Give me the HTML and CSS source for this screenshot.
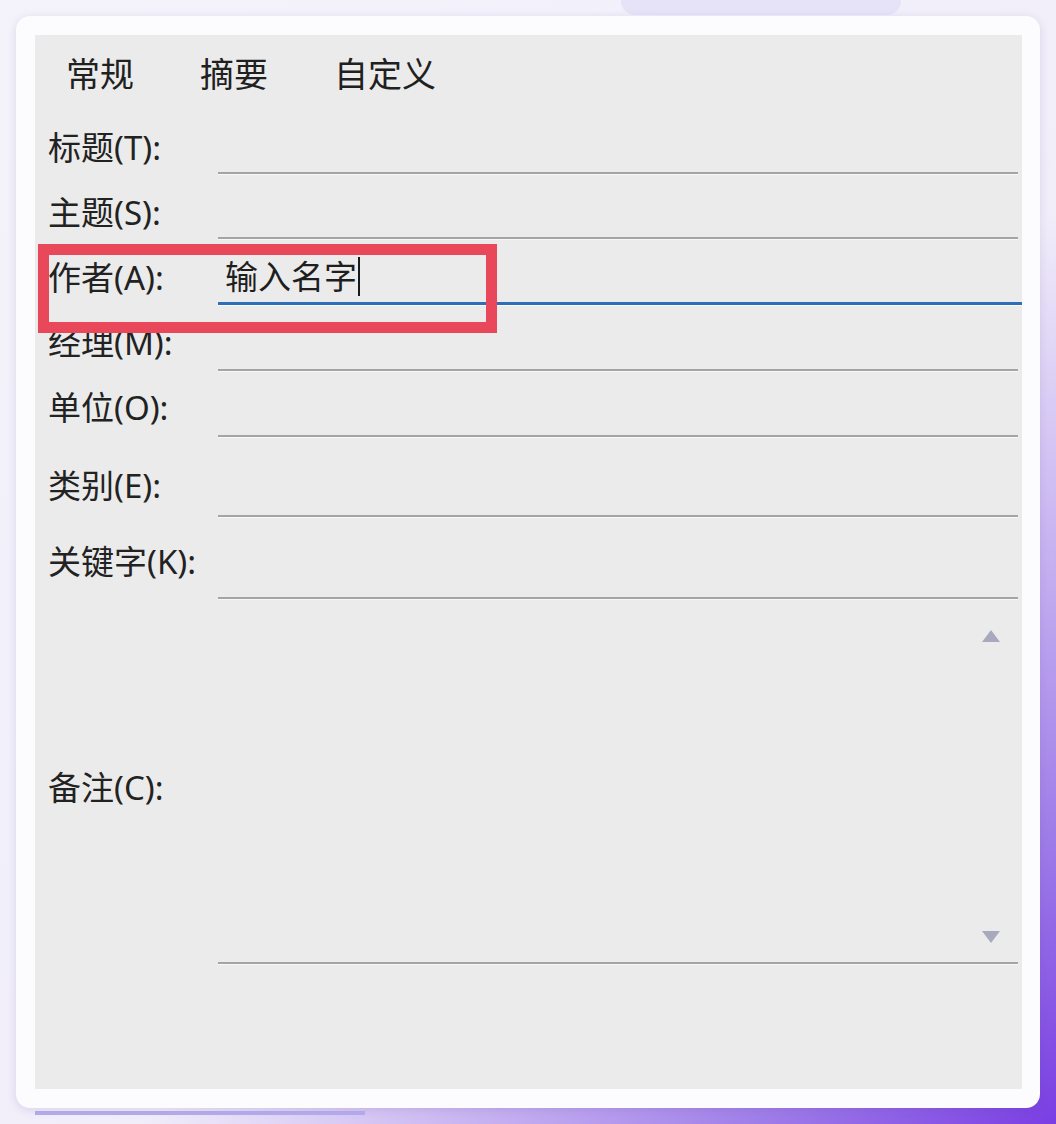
FILE: index.html
```html
<!DOCTYPE html>
<html lang="zh-CN">
<head>
<meta charset="utf-8">
<title>属性 - 摘要</title>
<link rel="stylesheet" href="styles.css">
</head>
<body>
<div class="deco-pill"></div>
<div class="deco-bar"></div>
<div class="card">
  <div class="panel">
    <div class="tabs">
      <span class="tab">常规</span>
      <span class="tab">摘要</span>
      <span class="tab">自定义</span>
    </div>
    <div class="form">
      <div class="row r1"><label class="lbl">标题(T):</label><div class="field"></div></div>
      <div class="row r2"><label class="lbl">主题(S):</label><div class="field"></div></div>
      <div class="row r3"><label class="lbl">作者(A):</label><div class="field active"><span class="value">输入名字</span><span class="caret"></span></div></div>
      <div class="row r4"><label class="lbl">经理(M):</label><div class="field"></div></div>
      <div class="row r5"><label class="lbl">单位(O):</label><div class="field"></div></div>
      <div class="row r6"><label class="lbl">类别(E):</label><div class="field"></div></div>
      <div class="row r7"><label class="lbl">关键字(K):</label><div class="field"></div></div>
      <div class="row r8"><label class="lbl">备注(C):</label>
        <div class="field area">
          <div class="scroll">
            <svg class="arrow" width="20" height="14" viewBox="0 0 20 14"><polygon points="10,1 19,13 1,13" fill="#a9a9bd"/></svg>
            <svg class="arrow" width="20" height="14" viewBox="0 0 20 14"><polygon points="1,1 19,1 10,13" fill="#a9a9bd"/></svg>
          </div>
        </div>
      </div>
    </div>
    <div class="highlight"></div>
  </div>
</div>
</body>
</html>
```
FILE: styles.css
```css
html, body {
  margin: 0;
  padding: 0;
}
body {
  position: relative;
  width: 1056px;
  height: 1124px;
  overflow: hidden;
  background: linear-gradient(135deg, #f4f3fb 0%, #f1eefa 58%, #c3acf0 75%, #a07fe9 86%, #7a3de3 100%);
  font-family: "Noto Sans", "Noto Sans CJK SC", sans-serif;
  color: #1e1e1e;
}
.deco-pill {
  position: absolute;
  left: 621px;
  top: -20px;
  width: 280px;
  height: 35px;
  border-radius: 14px;
  background: #e6e3f9;
}
.deco-bar {
  position: absolute;
  left: 35px;
  top: 1111px;
  width: 330px;
  height: 4px;
  background: #b7aeee;
}
.card {
  position: relative;
  margin: 16px 0 0 16px;
  width: 1024px;
  height: 1092px;
  box-sizing: border-box;
  padding: 19px 18px 19px 19px;
  background: #fcfcfe;
  border-radius: 14px;
  box-shadow: 0 2px 10px rgba(70, 50, 130, 0.14);
}
.panel {
  position: relative;
  height: 100%;
  background: #ebebeb;
  display: flex;
  flex-direction: column;
}
.tabs {
  height: 75px;
  display: flex;
  align-items: center;
  gap: 66px;
  padding-left: 31px;
  font-size: 34px;
  line-height: 40px;
  color: #202020;
  box-sizing: border-box;
  padding-top: 2px;
}
.form {
  display: flex;
  flex-direction: column;
  padding-left: 13px;
  padding-right: 4px;
}
.row {
  display: grid;
  grid-template-columns: 170px 1fr;
}
.r1 { height: 64px; }
.r2 { height: 65px; }
.r3 { height: 66px; }
.r4 { height: 66px; }
.r5 { height: 66px; }
.r6 { height: 80px; }
.r7 { height: 82px; }
.r8 { height: 365px; }
.lbl {
  align-self: end;
  font-size: 33px;
  line-height: 40px;
  margin-bottom: 6px;
  white-space: nowrap;
  color: #222;
}
.r3 .lbl { margin-bottom: 7px; }
.r4 .lbl { margin-bottom: 8px; }
.r5 .lbl { margin-bottom: 9px; }
.r6 .lbl { margin-bottom: 11px; }
.r7 .lbl { margin-bottom: 17px; }
.r8 .lbl { align-self: center; margin-bottom: 0; margin-top: 12px; }
.field {
  border-bottom: 2px solid #a3a3a8;
  box-shadow: 0 1px 0 #f8f8f8;
  display: flex;
  align-items: flex-end;
}
.field.active {
  border-bottom: 3px solid #2e6fb9;
  margin-right: -4px;
  padding-left: 7px;
  padding-bottom: 5px;
}
.value {
  font-size: 33px;
  line-height: 40px;
  color: #1e1e1e;
}
.caret {
  width: 2px;
  height: 39px;
  background: #1a1a1a;
  margin-left: 1px;
  margin-bottom: 1px;
}
.field.area {
  justify-content: flex-end;
  align-items: stretch;
}
.scroll {
  display: flex;
  flex-direction: column;
  justify-content: space-between;
  padding: 30px 17px 18px 0;
}
.arrow {
  display: block;
}
.highlight {
  position: absolute;
  left: 3px;
  top: 209px;
  width: 459px;
  height: 89px;
  box-sizing: border-box;
  border: 11px solid #e9485b;
  z-index: 2;
}
```
